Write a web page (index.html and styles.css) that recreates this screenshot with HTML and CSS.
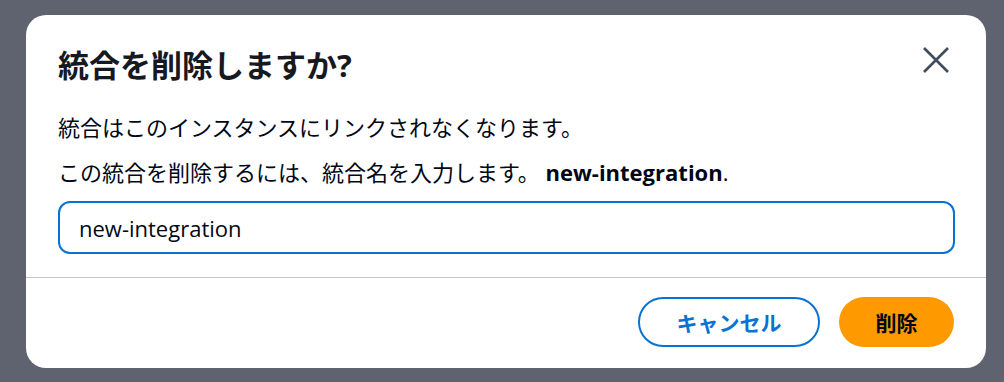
FILE: index.html
```html
<!DOCTYPE html>
<html lang="ja">
<head>
<meta charset="UTF-8">
<meta name="viewport" content="width=device-width, initial-scale=1.0">
<title>統合を削除</title>
<link rel="stylesheet" href="styles.css">
</head>
<body>

<div class="modal">
  <div class="modal-header">
    <h2 class="modal-title">統合を削除しますか?</h2>
    <button class="close-btn" aria-label="閉じる">
      <svg width="28" height="28" viewBox="0 0 28 28">
        <path d="M2 2 L26 26 M26 2 L2 26" stroke="#414d5c" stroke-width="2.6" stroke-linecap="butt" fill="none"/>
      </svg>
    </button>
  </div>
  <div class="modal-body">
    <p class="line">統合はこのインスタンスにリンクされなくなります。</p>
    <p class="line">この統合を削除するには、統合名を入力します。 <b class="name">new-integration</b>.</p>
    <input class="name-input" type="text" value="new-integration">
  </div>
  <div class="modal-footer">
    <button class="btn btn-cancel">キャンセル</button>
    <button class="btn btn-delete">削除</button>
  </div>
</div>

</body>
</html>
```

FILE: styles.css
```css
body {
  margin: 0;
  background-color: #5f6370;
  font-family: "Open Sans", "Noto Sans CJK JP", sans-serif;
  color: #000716;
}

.modal {
  margin: 15px 0 0 26px;
  width: 960px;
  height: 353px;
  background: #fff;
  border-radius: 20px;
  display: flex;
  flex-direction: column;
  overflow: hidden;
}

.modal-header {
  display: flex;
  justify-content: space-between;
  align-items: flex-start;
  padding: 29px 36px 0 32px;
}

.modal-title {
  margin: 0;
  font-size: 31px;
  line-height: 42px;
  font-weight: 700;
  color: #16191f;
}

.close-btn {
  border: none;
  background: none;
  padding: 0;
  margin-top: 2px;
  cursor: pointer;
  display: flex;
}

.modal-body {
  padding: 26px 31px 0 32px;
}

.line {
  margin: 0 0 15px;
  font-size: 22px;
  line-height: 30px;
}

.line .name {
  font-weight: 700;
}

.name-input {
  display: block;
  box-sizing: border-box;
  width: 100%;
  height: 53px;
  margin-top: -1px;
  border: 2px solid #0972d3;
  border-radius: 12px;
  padding: 0 19px;
  font-family: inherit;
  font-size: 22px;
  color: #000716;
  outline: none;
}

.modal-footer {
  margin-top: 23px;
  border-top: 1px solid #c6c6cd;
  display: flex;
  justify-content: flex-end;
  gap: 19px;
  padding: 19px 32px 0;
}

.btn {
  height: 50px;
  border-radius: 25px;
  font-family: inherit;
  font-size: 21px;
  font-weight: 700;
  cursor: pointer;
  box-sizing: border-box;
}

.btn-cancel {
  width: 182px;
  background: #fff;
  border: 2px solid #0972d3;
  color: #0972d3;
}

.btn-delete {
  width: 115px;
  background: #ff9900;
  border: none;
  color: #000716;
}
```
